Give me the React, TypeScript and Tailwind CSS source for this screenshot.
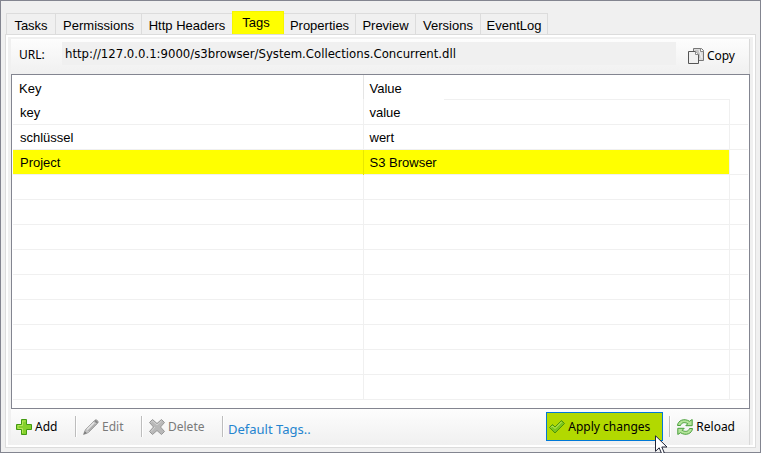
import type { ReactNode } from "react";
import { clsx } from "clsx";

const tabs = [
  { name: "Tasks", width: "w-[50px]" },
  { name: "Permissions", width: "w-[87px]" },
  { name: "Http Headers", width: "w-[92px]" },
  { name: "Tags", width: "w-[52px]" },
  { name: "Properties", width: "w-[73px]" },
  { name: "Preview", width: "w-[61px]" },
  { name: "Versions", width: "w-[66px]" },
  { name: "EventLog", width: "w-[68px]" },
];

const tags = [
  { key: "key", value: "value" },
  { key: "schlüssel", value: "wert" },
  { key: "Project", value: "S3 Browser", selected: true },
];

const emptyRows = Array.from({ length: 9 }, (_, i) => i);

export default function App() {
  return (
    <div className="bg-white font-['Liberation_Sans',sans-serif] text-[13px] text-black">
      <main className="border border-[#838590] bg-[#f0f0f0] px-1 pt-2.5 pb-1">
        <TabBar />
        <section
          aria-label="Tags"
          className="border border-[#dcdcdc] bg-[#f0f0f0] outline-2 -outline-offset-3 outline-white"
        >
          <div className="px-[5px] pt-1 pb-0.5">
            <UrlBar />
            <TagTable />
            <Toolbar />
          </div>
        </section>
      </main>
    </div>
  );
}

function TabBar() {
  return (
    <div role="tablist" className="flex items-end pl-px">
      {tabs.map((tab) => (
        <button
          key={tab.name}
          role="tab"
          aria-selected={tab.name === "Tags"}
          className={clsx(
            "-mr-px shrink-0 border border-b-0 whitespace-nowrap",
            tab.width,
            tab.name === "Tags"
              ? "z-10 h-[23px] border-[#f5f500] bg-[#ffff00] pr-1"
              : "h-[21px] border-[#dcdcdc] pt-0.5"
          )}
        >
          {tab.name}
        </button>
      ))}
    </div>
  );
}

function UrlBar() {
  return (
    <div className="flex h-[35px] items-center border-r border-[#d9d9d9] bg-linear-to-b from-[#fdfdfd] to-[#f0f0f0] pr-2 pb-0.5 pl-2 font-['Noto_Sans',sans-serif] text-xs">
      <label htmlFor="url" className="w-[43px] pb-0.5">
        URL:
      </label>
      <input
        id="url"
        readOnly
        value="http://127.0.0.1:9000/s3browser/System.Collections.Concurrent.dll"
        className="mb-1 h-[23px] min-w-0 flex-1 bg-[#f0f0f0] px-[3px] font-['DejaVu_Sans_Condensed',sans-serif] text-[13px]"
      />
      <button className="ml-3 flex items-center gap-[3px] pr-1.5">
        <CopyIcon />
        Copy
      </button>
    </div>
  );
}

function TagTable() {
  return (
    <div className="h-[335px] border border-[#838590] bg-white px-px">
      <table className="w-full table-fixed border-collapse">
        <colgroup>
          <col className="w-[350px]" />
          <col className="w-[81px]" />
          <col />
          <col className="w-[19px]" />
        </colgroup>
        <thead>
          <tr className="h-[24px] text-left">
            <th className="border-r border-[#e5e5e5] pt-1 pl-1.5 font-normal">Key</th>
            <th className="pt-1 pl-1.5 font-normal">Value</th>
            <td className="border-b border-[#f0f0f0]" />
            <td />
          </tr>
        </thead>
        <tbody>
          {tags.map((tag) => (
            <tr key={tag.key} className="h-[25px] border-b border-[#f0f0f0]">
              <td
                className={clsx(
                  "border-r pt-0.5 pl-[7px]",
                  tag.selected ? "border-[#e8e800] bg-[#ffff00]" : "border-[#f0f0f0]"
                )}
              >
                {tag.key}
              </td>
              <td
                colSpan={2}
                className={clsx(
                  "border-r border-[#f0f0f0] pt-0.5 pl-1.5",
                  tag.selected && "bg-[#ffff00]"
                )}
              >
                {tag.value}
              </td>
              <td />
            </tr>
          ))}
          {emptyRows.map((row) => (
            <tr key={row} className="h-[25px] border-b border-[#f0f0f0]">
              <td className="border-r border-[#f0f0f0]" />
              <td colSpan={2} className="border-r border-[#f0f0f0]" />
              <td />
            </tr>
          ))}
        </tbody>
      </table>
    </div>
  );
}

function Toolbar() {
  return (
    <div className="flex h-[36px] items-center border-r border-[#d9d9d9] bg-linear-to-b from-[#fdfdfd] to-[#f0f0f0] pr-3.5 pb-px pl-[5px] font-['Noto_Sans',sans-serif] text-xs">
      <ToolButton icon={<AddIcon />} label="Add" className="w-[59px]" />
      <Separator />
      <ToolButton icon={<EditIcon />} label="Edit" className="ml-1.5 w-[58px]" disabled />
      <Separator />
      <ToolButton icon={<DeleteIcon />} label="Delete" className="ml-1.5 w-[73px]" disabled />
      <Separator />
      <a href="#default-tags" className="mt-1.5 ml-1 text-[13px] text-[#2484cf]">
        Default Tags..
      </a>
      <div className="relative ml-auto">
        <ToolButton
          icon={<CheckIcon />}
          label="Apply changes"
          className="h-[29px] w-[117px] border border-[#0078d7] bg-[#b2d900] pl-0.5"
        />
        <CursorIcon />
      </div>
      <div className="ml-1.5 flex items-center gap-1.5">
        <Separator />
        <ToolButton icon={<ReloadIcon />} label="Reload" />
      </div>
    </div>
  );
}

function Separator() {
  return <div className="h-[21px] w-0.5 shrink-0 border-l border-[#bdbdbd] bg-white" />;
}

type ToolButtonProps = {
  icon: ReactNode;
  label: string;
  className?: string;
  disabled?: boolean;
};

function ToolButton({ icon, label, className, disabled }: ToolButtonProps) {
  return (
    <button
      disabled={disabled}
      className={clsx(
        "flex shrink-0 items-center gap-[3px] whitespace-nowrap disabled:text-[#7a7a7a]",
        className
      )}
    >
      {icon}
      {label}
    </button>
  );
}

function CopyIcon() {
  return (
    <svg width="16" height="16" viewBox="0 0 16 16" fill="none">
      <path d="M5.500.5h8l2 2v10h-10z" fill="#dcdcdc" stroke="#777" />
      <path d="M7 2h5v8H7z" fill="#c4c4c4" />
      <path d="m11 2 3 8" stroke="#f4f4f4" />
      <path d="M12.500.5v3h3" fill="#fff" stroke="#888" />
      <path d="M.5 3.500h7l3 3v9H.5z" fill="#f0f0f0" stroke="#555" />
      <path d="M7.500 3.500v3h3" fill="#fff" stroke="#888" />
    </svg>
  );
}

function AddIcon() {
  return (
    <svg width="16" height="16" viewBox="0 0 16 16">
      <path
        d="M5.500.5h5v5h5v5h-5v5h-5v-5h-5v-5h5z"
        fill="#86d12c"
        stroke="#439a12"
        strokeLinejoin="round"
      />
      <path d="M6.500 14V9.500H2v-3h4.500V2h3" fill="none" stroke="#b5e65a" />
    </svg>
  );
}

function EditIcon() {
  return (
    <svg width="16" height="16" viewBox="0 0 16 16">
      <path
        d="M.5 15.500 2.500 10.500 11.500 1.500q1.500-1.500 3 0t0 3L5.500 13.500z"
        fill="#c4c4c4"
        stroke="#a2a2a2"
      />
      <path d="m4 10.500 7-7" stroke="#e4e4e4" strokeWidth="1.500" />
      <path d="m5.500 12 7-7" stroke="#999" />
      <path d="m12 1.500 2.500 2.500" stroke="#888" strokeWidth="2" />
      <path d="m.8 15.200 1-3 2 2z" fill="#777" />
    </svg>
  );
}

function DeleteIcon() {
  return (
    <svg width="16" height="16" viewBox="0 0 16 16">
      <path
        d="M3.500.5 8 4.500 12.500.5l3 3L11.500 8l4 4.500-3 3L8 11.500l-4.500 4-3-3L4.500 8l-4-4.500z"
        fill="#b8b8b8"
        stroke="#969696"
        strokeLinejoin="round"
      />
      <path d="m2 3.500 1.500-1.500L8 6l4.500-4M2 12.500 6 8" fill="none" stroke="#d5d5d5" />
    </svg>
  );
}

function CheckIcon() {
  return (
    <svg width="16" height="16" viewBox="0 0 16 16">
      <path
        d="m.5 8.500 3-3L6 8l6.500-6.500 3 3L6 14z"
        fill="#7cc61c"
        stroke="#4d940b"
        strokeLinejoin="round"
      />
      <path d="m2 8.500 1.500-1.500L6 9.500 12.500 3" fill="none" stroke="#c9ed5c" />
    </svg>
  );
}

function ReloadIcon() {
  return (
    <svg width="16" height="16" viewBox="0 0 16 16">
      <path
        d="M.5 6.500C1 1.500 7-1.200 12.500 2.300L15.200.5v6.200H8.800l2-2C7.500 2.800 4.500 3.500 3.500 6.500z"
        fill="#b4e49a"
        stroke="#4a9f3c"
        strokeLinejoin="round"
      />
      <path
        d="M15.500 9.500C15 14.500 9 17.200 3.500 13.700L.8 15.500V9.300h6.400l-2 2c3.300 1.900 6.300 1.200 7.300-1.800z"
        fill="#b4e49a"
        stroke="#4a9f3c"
        strokeLinejoin="round"
      />
    </svg>
  );
}

function CursorIcon() {
  return (
    <svg
      aria-hidden="true"
      className="pointer-events-none absolute top-[23px] left-[109px]"
      width="13"
      height="20"
      viewBox="0 0 13 20"
    >
      <path
        d="M.5.8v15.500l3.700-3.500 2.500 6 2.600-1-2.500-5.800h5.200z"
        fill="#fff"
        stroke="#222638"
      />
    </svg>
  );
}
